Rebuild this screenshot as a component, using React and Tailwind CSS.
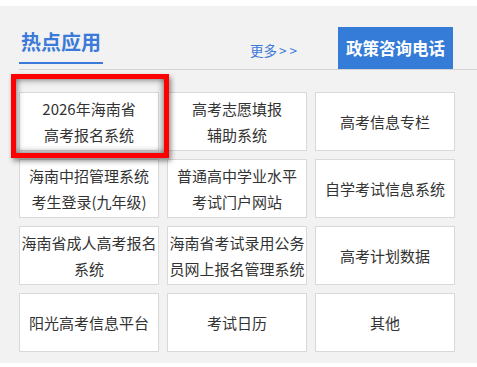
export default function App() {
  const font = { fontFamily: '"Noto Sans CJK SC", "Noto Sans", sans-serif' };
  const cells = [
    ["2026年海南省", "高考报名系统"],
    ["高考志愿填报", "辅助系统"],
    ["高考信息专栏"],
    ["海南中招管理系统", "考生登录(九年级)"],
    ["普通高中学业水平", "考试门户网站"],
    ["自学考试信息系统"],
    ["海南省成人高考报名", "系统"],
    ["海南省考试录用公务", "员网上报名管理系统"],
    ["高考计划数据"],
    ["阳光高考信息平台"],
    ["考试日历"],
    ["其他"],
  ];
  return (
    <div className="w-[477px] h-[367px] bg-white overflow-hidden" style={font}>
      <div className="relative mt-[6px] h-[357px] bg-[#f2f2f2]">
        <div className="ml-[19px] flex h-[64px] items-end border-b border-[#d4d4d4]">
          <div className="mb-[5px] w-[84px] border-b-2 border-[#3b7ad8] pb-[8px] text-center text-[20px] font-bold leading-[24px] text-[#3b7ad8]">
            热点应用
          </div>
          <div className="mb-[10px] ml-[147px] text-[13.5px] leading-[18px] text-[#3b7ad8] whitespace-nowrap">
            更多<span className="ml-[2px] tracking-[3px]">&gt;&gt;</span>
          </div>
          <div className="ml-auto mr-[24px] flex h-[42px] w-[115px] items-center justify-center bg-[#357bd8] text-[16.5px] font-bold text-white whitespace-nowrap">
            政策咨询电话
          </div>
        </div>
        <div className="ml-[19px] mt-[22px] grid grid-cols-[140px_140px_140px] gap-x-[8px] gap-y-[8px]">
          {cells.map((lines, i) => (
            <div
              key={i}
              className="flex h-[59px] flex-col items-center justify-center border border-[#d9d9d9] bg-white text-[15px] leading-[26px] text-[#333] whitespace-nowrap"
            >
              {lines.map((l, j) => (
                <div key={j}>{l}</div>
              ))}
            </div>
          ))}
        </div>
        <div className="pointer-events-none absolute left-[11px] top-[68px] h-[84px] w-[158px] border-[5px] border-[#ff0000] shadow-[inset_0_0_7px_rgba(0,0,0,0.65),2px_3px_5px_rgba(0,0,0,0.45)]" />
      </div>
    </div>
  );
}
